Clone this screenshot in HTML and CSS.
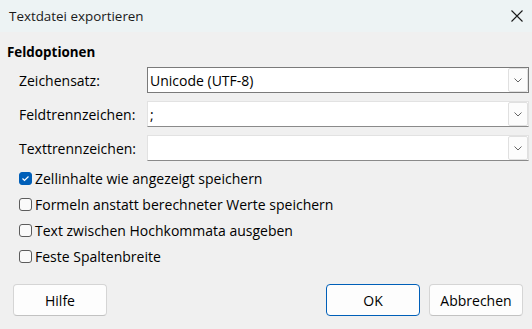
FILE: index.html
```html
<!DOCTYPE html>
<html lang="de">
<head>
<meta charset="utf-8">
<title>Textdatei exportieren</title>
<link rel="stylesheet" href="styles.css">
</head>
<body>
<div class="dialog">
  <div class="titlebar">
    <span class="title">Textdatei exportieren</span>
    <svg class="close" width="12" height="12" viewBox="0 0 12 12"><path d="M0.5 0.5 L11.5 11.5 M11.5 0.5 L0.5 11.5" stroke="#1a1a1a" stroke-width="1.1" fill="none"/></svg>
  </div>
  <div class="content">
    <div class="section">Feldoptionen</div>
    <div class="form">
      <label class="lbl">Zeichensatz:</label>
      <div class="combo focused"><span class="val">Unicode (UTF-8)</span><span class="drop"><svg width="8" height="5" viewBox="0 0 8 5"><path d="M0.5 0.5 L4 4 L7.5 0.5" stroke="#666" stroke-width="1" fill="none"/></svg></span></div>
      <label class="lbl">Feldtrennzeichen:</label>
      <div class="combo"><span class="val">;</span><span class="drop"><svg width="8" height="5" viewBox="0 0 8 5"><path d="M0.5 0.5 L4 4 L7.5 0.5" stroke="#666" stroke-width="1" fill="none"/></svg></span></div>
      <label class="lbl">Texttrennzeichen:</label>
      <div class="combo"><span class="val"></span><span class="drop"><svg width="8" height="5" viewBox="0 0 8 5"><path d="M0.5 0.5 L4 4 L7.5 0.5" stroke="#666" stroke-width="1" fill="none"/></svg></span></div>
    </div>
    <div class="checks">
      <div class="check"><span class="box checked"><svg width="9" height="7" viewBox="0 0 9 7"><path d="M1.5 3.5 L3.5 5.5 L7.5 1.5" stroke="#fff" stroke-width="1.2" fill="none"/></svg></span>Zellinhalte wie angezeigt speichern</div>
      <div class="check"><span class="box"></span>Formeln anstatt berechneter Werte speichern</div>
      <div class="check"><span class="box"></span>Text zwischen Hochkommata ausgeben</div>
      <div class="check"><span class="box"></span>Feste Spaltenbreite</div>
    </div>
    <div class="buttons">
      <button class="btn">Hilfe</button>
      <div class="spacer"></div>
      <button class="btn default">OK</button>
      <button class="btn">Abbrechen</button>
    </div>
  </div>
</div>
</body>
</html>
```
FILE: styles.css
```css
html, body {
  margin: 0;
  padding: 0;
  width: 532px;
  height: 329px;
  overflow: hidden;
  background: #f0f0f0;
  font-family: "Open Sans", "Liberation Sans", Arial, sans-serif;
  font-size: 14px;
  color: #000;
}
.dialog {
  display: flex;
  flex-direction: column;
  height: 329px;
}
.titlebar {
  height: 32px;
  background: #edf3f4;
  display: flex;
  align-items: center;
  padding: 0 9px 0 9px;
  justify-content: space-between;
}
.title {
  color: #1a1a1a;
  font-size: 13.4px;
}
.content {
  padding: 10px 3px 0 7px;
  display: flex;
  flex-direction: column;
}
.section {
  font-weight: bold;
  font-size: 13.4px;
  height: 20px;
  line-height: 20px;
}
.form {
  margin-top: 5px;
  display: grid;
  grid-template-columns: 140px 1fr;
  row-gap: 8px;
}
.lbl {
  padding-left: 12px;
  display: flex;
  align-items: center;
  height: 26px;
}
.combo {
  height: 26px;
  box-sizing: border-box;
  background: #fff;
  border: 1px solid #e2e2e2;
  border-bottom-color: #8a8a8a;
  display: flex;
  align-items: center;
  justify-content: space-between;
}
.combo.focused {
  border-color: #7a7a7a;
}
.val {
  padding-left: 2px;
}
.drop {
  width: 20px;
  height: 24px;
  box-sizing: border-box;
  border: 1px solid #e0e0e0;
  border-radius: 2px;
  background: #fcfcfc;
  display: flex;
  align-items: center;
  justify-content: center;
}
.checks {
  margin-top: 4px;
  display: flex;
  flex-direction: column;
}
.check {
  height: 26px;
  display: flex;
  align-items: center;
  padding-left: 12px;
}
.box {
  width: 13px;
  height: 13px;
  box-sizing: border-box;
  border: 1px solid #5c5c5c;
  border-radius: 3px;
  background: #fafafa;
  margin-right: 3px;
  display: flex;
  align-items: center;
  justify-content: center;
}
.box.checked {
  background: #005fb8;
  border-color: #005fb8;
}
.buttons {
  margin-top: 15px;
  display: flex;
  padding-left: 6px;
  padding-right: 6px;
  gap: 9px;
}
.spacer {
  flex: 1;
}
.btn {
  width: 94px;
  height: 32px;
  box-sizing: border-box;
  background: #fdfdfd;
  border: 1px solid #d5d5d5;
  border-bottom-color: #c2c2c2;
  border-radius: 4px;
  font-family: inherit;
  font-size: 14px;
  color: #000;
  padding: 0;
}
.btn.default {
  border: 1px solid #005fb8;
}
```
